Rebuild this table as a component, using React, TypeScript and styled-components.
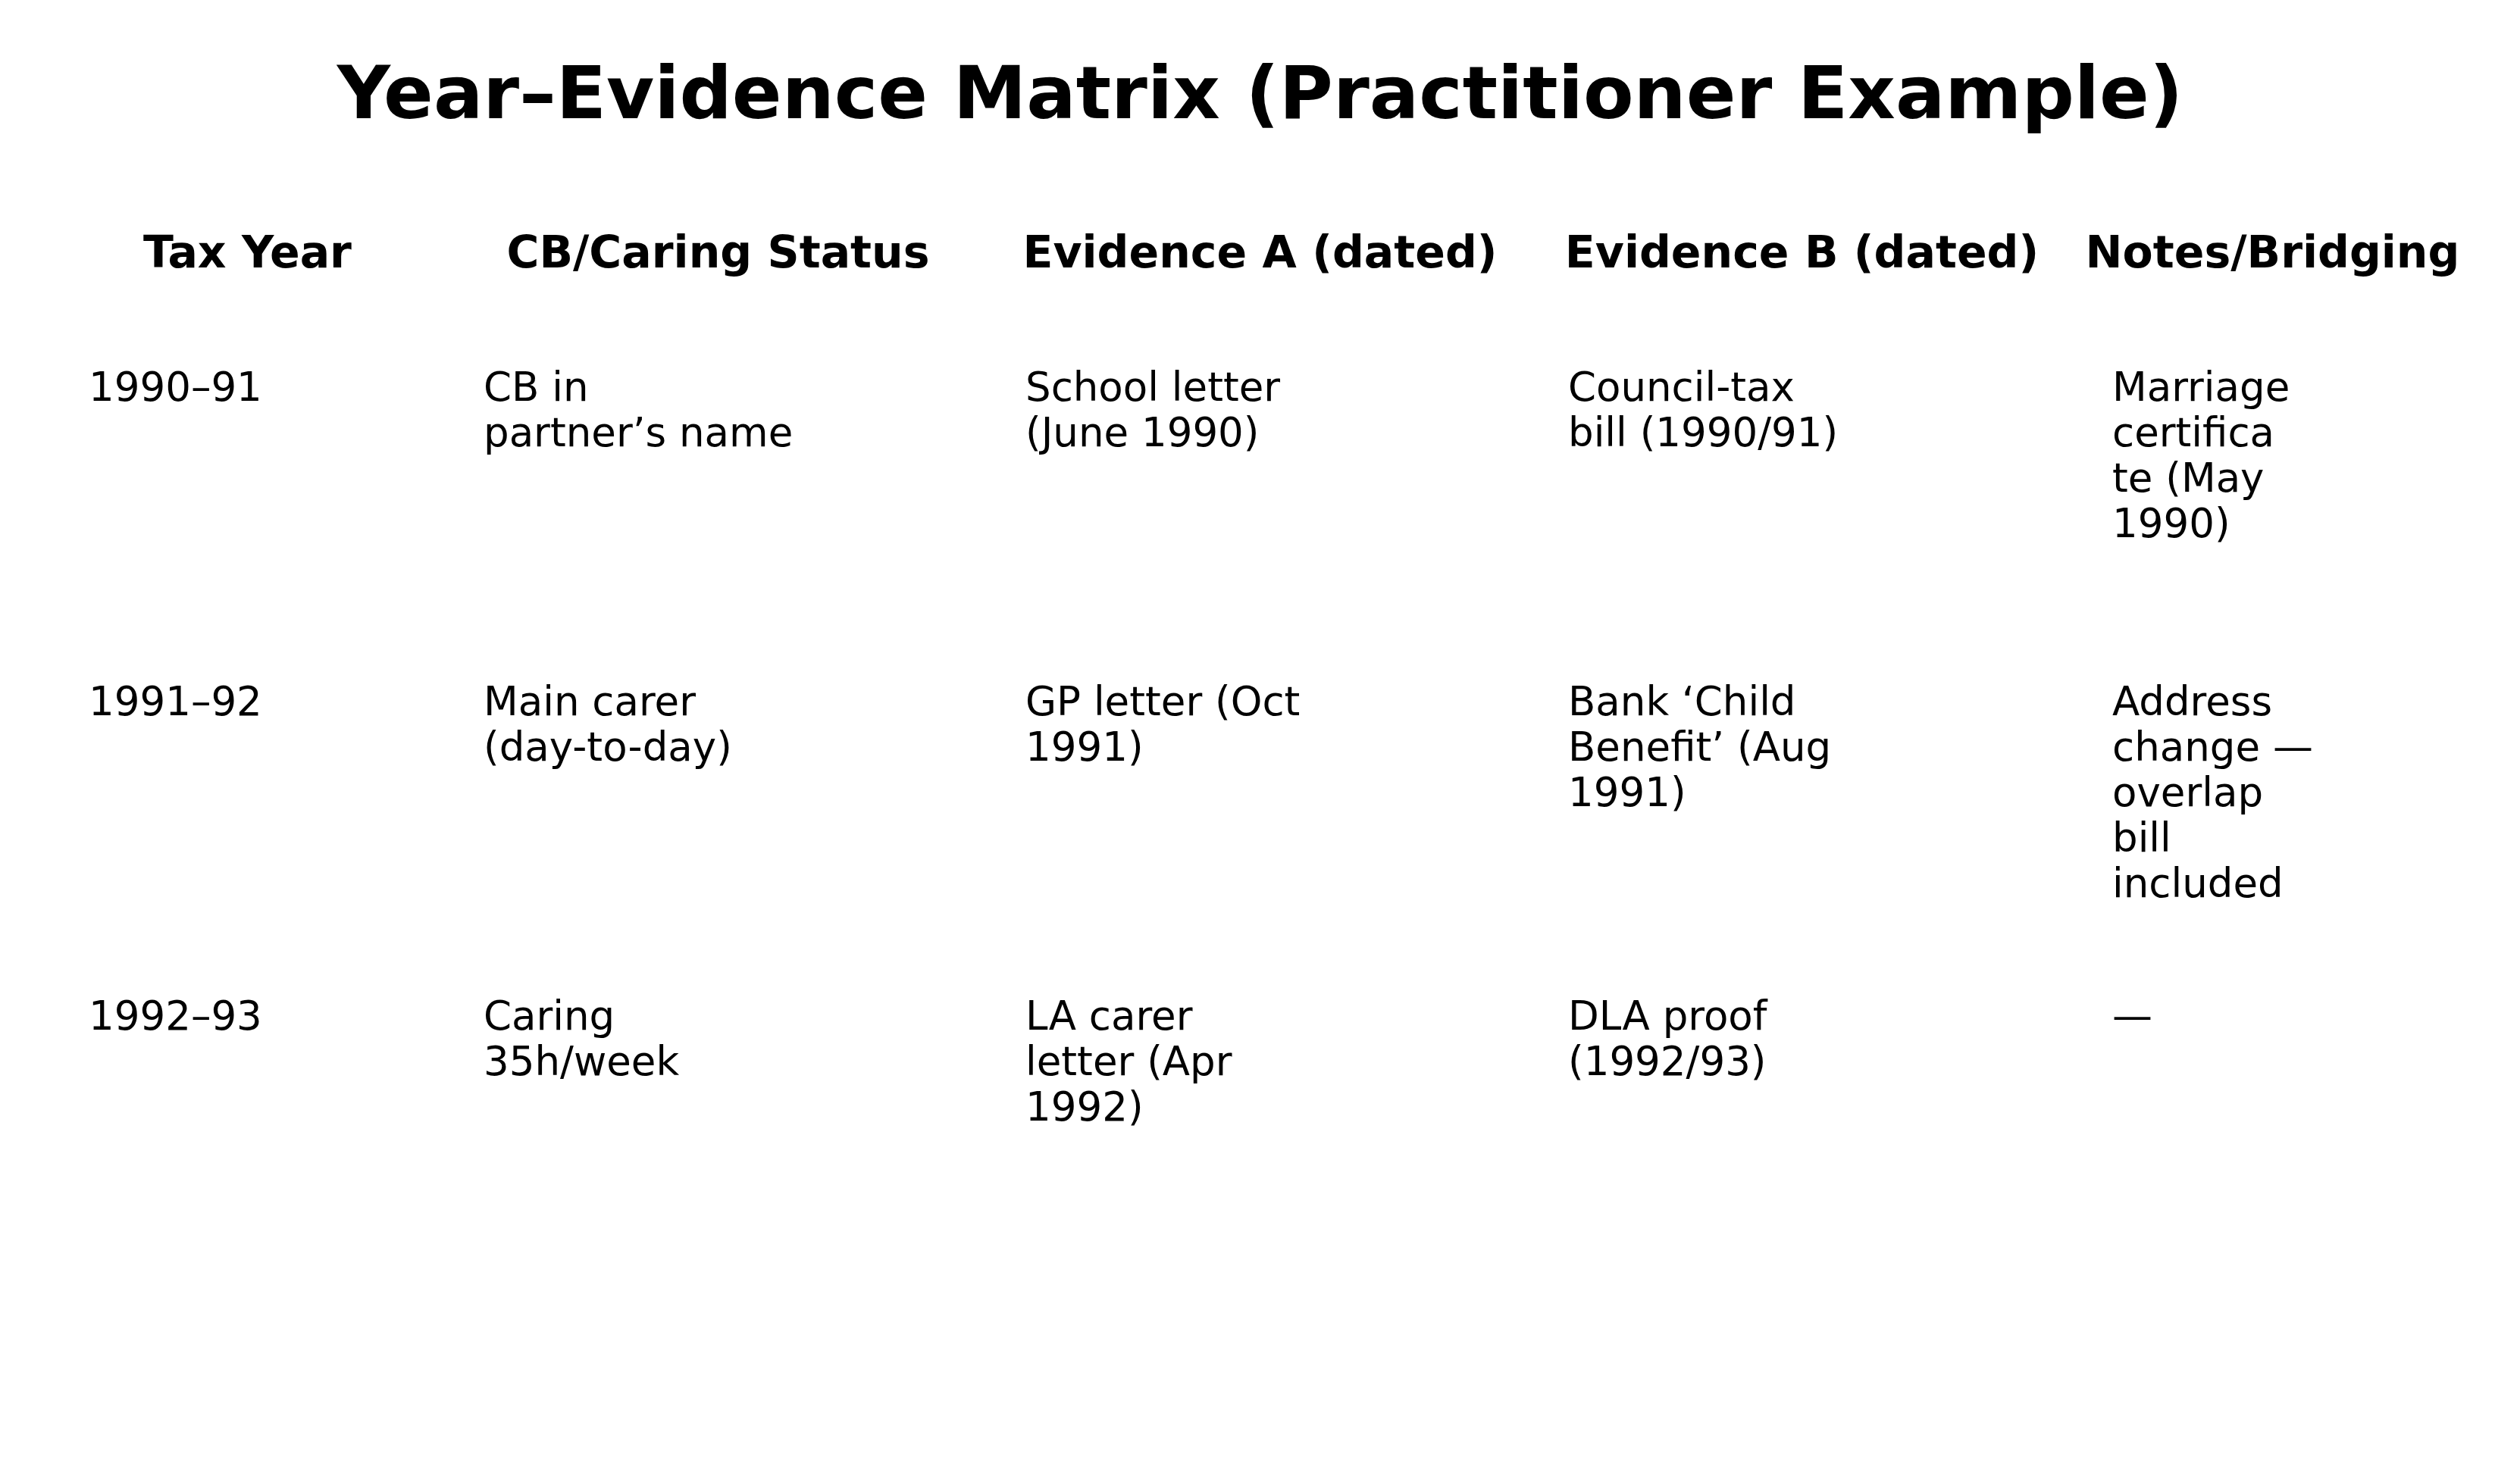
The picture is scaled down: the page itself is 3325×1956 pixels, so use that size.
import React from "react";
import styled, { createGlobalStyle } from "styled-components";

// ─── Global ──────────────────────────────────────────────────────────────────
const GlobalStyle = createGlobalStyle`
  html, body {
    margin: 0;
    padding: 0;
    background: #fff;
  }
`;

// ─── Styled Components ───────────────────────────────────────────────────────
const Page = styled.div`
  width: 3325px;
  min-height: 1956px;
  box-sizing: border-box;
  padding-top: 74px;
  background: #fff;
  color: #000;
  font-family: "DejaVu Sans", "Liberation Sans", sans-serif;
`;

const Title = styled.h1`
  margin: 0;
  font-size: 97px;
  line-height: 97px;
  font-weight: 700;
  text-align: center;
  white-space: nowrap;
`;

const Matrix = styled.div`
  margin: 127px 0 0 66px;
  display: grid;
  grid-template-columns: 527px 715px 715px 715px 527px;
`;

const HeadCell = styled.div`
  padding: 0 6px 113px 0;
  font-size: 58.5px;
  line-height: 70px;
  font-weight: 700;
  text-align: center;
  white-space: nowrap;
`;

const Cell = styled.div<{ $pad: number }>`
  height: 415px;
  box-sizing: border-box;
  padding-left: ${(p) => p.$pad}px;
  font-size: 53px;
  line-height: 60px;
  white-space: pre;
`;

// ─── Data ────────────────────────────────────────────────────────────────────
const headers = [
  "Tax Year",
  "CB/Caring Status",
  "Evidence A (dated)",
  "Evidence B (dated)",
  "Notes/Bridging",
];

// left inset of the text in each column
const pads = [51, 45, 45, 46, 49];

// lines already wrapped like the printed matrix
const rows: string[][] = [
  [
    "1990–91",
    "CB in\npartner’s name",
    "School letter\n(June 1990)",
    "Council-tax\nbill (1990/91)",
    "Marriage\ncertifica\nte (May\n1990)",
  ],
  [
    "1991–92",
    "Main carer\n(day-to-day)",
    "GP letter (Oct\n1991)",
    "Bank ‘Child\nBenefit’ (Aug\n1991)",
    "Address\nchange —\noverlap\nbill\nincluded",
  ],
  [
    "1992–93",
    "Caring\n35h/week",
    "LA carer\nletter (Apr\n1992)",
    "DLA proof\n(1992/93)",
    "—",
  ],
];

// ─── Component ───────────────────────────────────────────────────────────────
const App: React.FC = () => (
  <Page>
    <GlobalStyle />
    <Title>Year–Evidence Matrix (Practitioner Example)</Title>
    <Matrix>
      {headers.map((h) => (
        <HeadCell key={h}>{h}</HeadCell>
      ))}
      {rows.map((row, i) =>
        row.map((text, j) => (
          <Cell key={`${i}-${j}`} $pad={pads[j]}>
            {text}
          </Cell>
        ))
      )}
    </Matrix>
  </Page>
);

export default App;
